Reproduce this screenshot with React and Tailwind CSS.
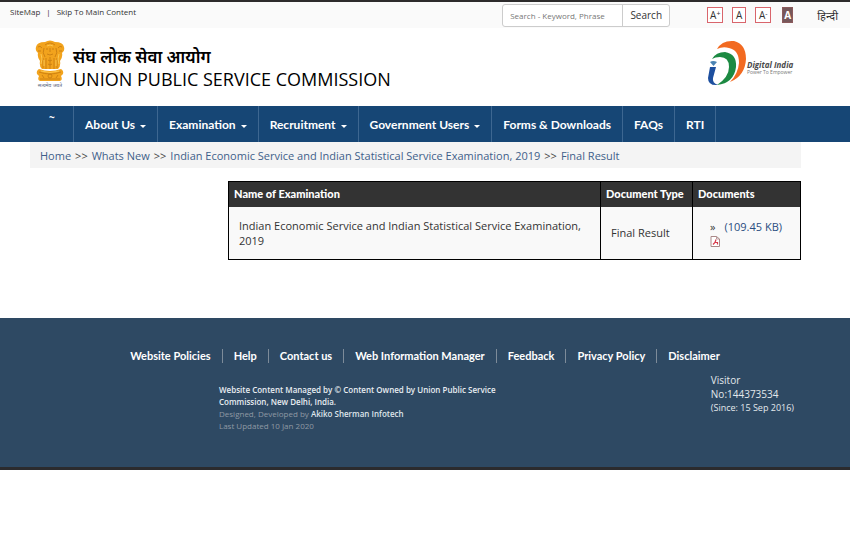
import React from "react";

const NAV = [
  { label: "About Us", menu: true },
  { label: "Examination", menu: true },
  { label: "Recruitment", menu: true },
  { label: "Government Users", menu: true },
  { label: "Forms & Downloads" },
  { label: "FAQs" },
  { label: "RTI" },
];

const FOOTER_LINKS = [
  "Website Policies",
  "Help",
  "Contact us",
  "Web Information Manager",
  "Feedback",
  "Privacy Policy",
  "Disclaimer",
];

function Emblem() {
  return (
    <svg viewBox="0 0 30 48" className="h-12 w-[30px] shrink-0" aria-label="State Emblem of India" role="img">
      <g fill="#f2a31d">
        <path d="M10 2Q15-1 20 2Q28 2 29 7Q30 11 27 13Q28 17 25 21Q26 26 23 29H7Q4 26 5 21Q2 17 3 13Q0 11 1 7Q2 2 10 2Z" />
        <path d="M4 29Q15 33 26 29Q29 31 28 34L26 36Q28 40 25 41H5Q2 40 4 36L2 34Q1 31 4 29Z" />
      </g>
      <g fill="none" stroke="#c47a10" strokeWidth="0.8">
        <path d="M10 5Q15 1 20 5M9 8Q7 13 10 17M21 8Q23 13 20 17M11 9H13M17 9H19M15 8V12M12 14Q15 16 18 14M3 7Q5 5 7 8M27 7Q25 5 23 8M3 11H6M24 11H27" />
        <path d="M8 18V28M11 18V29M19 18V29M22 18V28M13 20Q15 22 17 20M13 24Q15 26 17 24M15 17V29" />
        <path d="M4 32Q15 36 26 32M5 39H25M7 35L9 38M21 38L23 35" />
        <circle cx="15" cy="36" r="2" />
      </g>
      <g fill="none" stroke="#ffd15c" strokeWidth="0.8">
        <path d="M12 6Q15 4 18 6M6 14Q8 19 6 24M24 14Q22 19 24 24M9 20V26M21 20V26M6 31Q15 34 24 31" />
      </g>
      <text x="15" y="47" textAnchor="middle" fontSize="5" fill="#55627a">
        सत्यमेव जयते
      </text>
    </svg>
  );
}

function DigitalIndia() {
  return (
    <svg viewBox="0 0 90 46" className="h-[46px] w-[90px]" role="img" aria-label="Digital India, Power To Empower">
      <path d="M10 9Q15 0 27 1Q39 4 39 19Q38 36 23 42Q31 34 32 23Q32 10 22 8Q16 6 10 9Z" fill="#f26a21" />
      <path d="M5 19Q9 12 18 12Q30 14 29 27Q27 43 10 45Q22 37 22 27Q22 17 13 17Q8 17 5 19Z" fill="#1c8a42" />
      <path d="M3 27H9L6 38Q5 43 11 45Q1 46 1 38Z" fill="#1d4f9f" />
      <path d="M3 22Q6 20 10 22L6.500 26Z" fill="#4a83b3" />
      <text x="40" y="28" fontSize="8" fontStyle="italic" fontWeight="700" fill="#4a4a4a">
        Digital India
      </text>
      <text x="40" y="34" fontSize="5" fill="#777777">
        Power To Empower
      </text>
    </svg>
  );
}

function PdfIcon() {
  return (
    <svg viewBox="0 0 10 11" className="mt-[2px] h-[11px] w-[10px]" aria-hidden="true">
      <path d="M1 0.5H6.500L9.500 3V10.5H1Z" fill="#fff" stroke="#a88" />
      <path d="M6.500 0.5V3H9.500" fill="none" stroke="#a88" strokeWidth="0.8" />
      <path d="M3 8.500L5 6.500L6 3.500M5 6.500H7.500V8.500" fill="none" stroke="#d8394a" strokeWidth="1.2" />
    </svg>
  );
}

export default function App() {
  return (
    <div className="bg-white font-['Open_Sans','Noto_Sans','Noto_Sans_Devanagari',sans-serif] text-[11px] text-[#333]">
      <div className="flex h-7 items-start border-t-2 border-[#2d2b2c] bg-[#fafafa] pr-3 pl-[10px]">
        <div className="flex flex-1 gap-[6px] pt-1 text-[8px] leading-3">
          <a href="#map">SiteMap</a>
          <span>|</span>
          <a href="#main">Skip To Main Content</a>
        </div>
        <form className="mt-[2px] flex h-[23px] w-[168px] overflow-hidden rounded-[3px] border border-[#ccc] bg-white">
          <input
            aria-label="Search"
            placeholder="Search - Keyword, Phrase"
            className="w-[119px] px-[7px] text-[8px] outline-none placeholder:text-[#777]"
          />
          <button type="button" className="flex-1 border-l border-[#ccc] text-[10px]">
            Search
          </button>
        </form>
        <div className="ml-[37px] flex gap-[9px] pt-[5px] text-[10px] leading-[14px]">
          <button className="h-4 w-4 border border-[#d9656c] bg-white">A<sup className="text-[7px]">+</sup></button>
          <button className="h-4 w-[14px] border border-[#d9656c] bg-white">A</button>
          <button className="h-4 w-4 border border-[#d9656c] bg-white">A<sup className="text-[7px]">-</sup></button>
          <button className="ml-[2px] h-4 w-[11px] border border-[#8b5a5c] bg-[#76575a] font-bold text-white">A</button>
        </div>
        <a href="#hi" className="ml-6 pt-[6px] text-[11px] leading-4">हिन्दी</a>
      </div>

      <header className="flex h-[78px] items-start justify-between pt-3 pr-[53px] pl-[35px]">
        <div className="flex gap-2">
          <Emblem />
          <div className="pt-[6px] text-black">
            <div className="text-[17px] leading-[22px] font-semibold">संघ लोक सेवा आयोग</div>
            <h1 className="text-[18px] leading-[22px] font-normal">UNION PUBLIC SERVICE COMMISSION</h1>
          </div>
        </div>
        <DigitalIndia />
      </header>

      <nav className="flex h-9 items-stretch bg-[#164675] pl-[30px] font-['Lato',sans-serif] text-[12px] font-bold text-white">
        <a href="#home" className="w-11 border-r border-[#3d6791] pt-1 pl-[19px] font-['Open_Sans',sans-serif] text-[10px]">~</a>
        {NAV.map((n) => (
          <a key={n.label} href="#nav" className="flex items-center gap-[5px] border-r border-[#3d6791] px-[11px] pt-[2px] whitespace-nowrap">
            {n.label}
            {n.menu && <span className="mt-[2px] border-x-[3px] border-t-[3px] border-x-transparent border-t-white" />}
          </a>
        ))}
      </nav>

      <main id="main" className="pr-[49px] pl-[30px]">
        <div className="flex h-[26px] items-center gap-1 bg-[#f4f4f4] px-[10px] pt-[2px] text-[#3f5f8a]">
          <a href="#home">Home</a>
          <span className="text-[#444]">&gt;&gt;</span>
          <a href="#new">Whats New</a>
          <span className="text-[#444]">&gt;&gt;</span>
          <a href="#exam">Indian Economic Service and Indian Statistical Service Examination, 2019</a>
          <span className="text-[#444]">&gt;&gt;</span>
          <a href="#result">Final Result</a>
        </div>
        <div className="pt-[13px] pl-[198px]">
          <table className="w-full table-fixed border-collapse border border-black bg-[#f9f9f9] text-left">
            <colgroup>
              <col />
              <col className="w-[92px]" />
              <col className="w-[108px]" />
            </colgroup>
            <thead>
              <tr className="h-[25px] bg-[#333] font-['Lato',sans-serif] text-[11px] whitespace-nowrap text-white">
                <th className="border-r border-black px-[5px] font-black">Name of Examination</th>
                <th className="border-r border-black px-[5px] font-black">Document Type</th>
                <th className="px-[5px] font-black">Documents</th>
              </tr>
            </thead>
            <tbody>
              <tr className="h-[53px] leading-[15px]">
                <td className="border-r border-black px-[10px]">
                  Indian Economic Service and Indian Statistical Service Examination, 2019
                </td>
                <td className="border-r border-black px-[10px]">Final Result</td>
                <td className="pl-[17px]">
                  <div className="flex gap-[9px]">
                    <span>»</span>
                    <a href="#pdf" className="text-[#2a4d80]">(109.45 KB)</a>
                  </div>
                  <PdfIcon />
                </td>
              </tr>
            </tbody>
          </table>
        </div>
      </main>

      <footer className="mt-[58px] h-[152px] border-b-[3px] border-[#2b2b2e] bg-[#2e4963] pt-[31px] text-white">
        <ul className="flex justify-center font-['Lato',sans-serif] text-[11px] leading-[14px] font-bold">
          {FOOTER_LINKS.map((l) => (
            <li key={l} className="border-r border-[#7d8b99] px-[11px] last:border-r-0">
              <a href="#foot">{l}</a>
            </li>
          ))}
        </ul>
        <div className="flex justify-between pt-[10px] pr-14 pl-[219px]">
          <p className="w-[290px] pt-[11px] text-[8px] leading-3 text-[#8e99a3]">
            <span className="font-semibold text-[#e8edf2]">
              Website Content Managed by © Content Owned by Union Public Service Commission, New Delhi, India.
            </span>
            <br />
            Designed, Developed by <span className="font-semibold text-[#dfe5ea]">Akiko Sherman Infotech</span>
            <br />
            Last Updated 10 Jan 2020
          </p>
          <div className="text-[10px] leading-[14px] text-[#e3e8ec]">
            <div>Visitor</div>
            <div>No:144373534</div>
            <div className="text-[9px]">(Since: 15 Sep 2016)</div>
          </div>
        </div>
      </footer>
    </div>
  );
}
